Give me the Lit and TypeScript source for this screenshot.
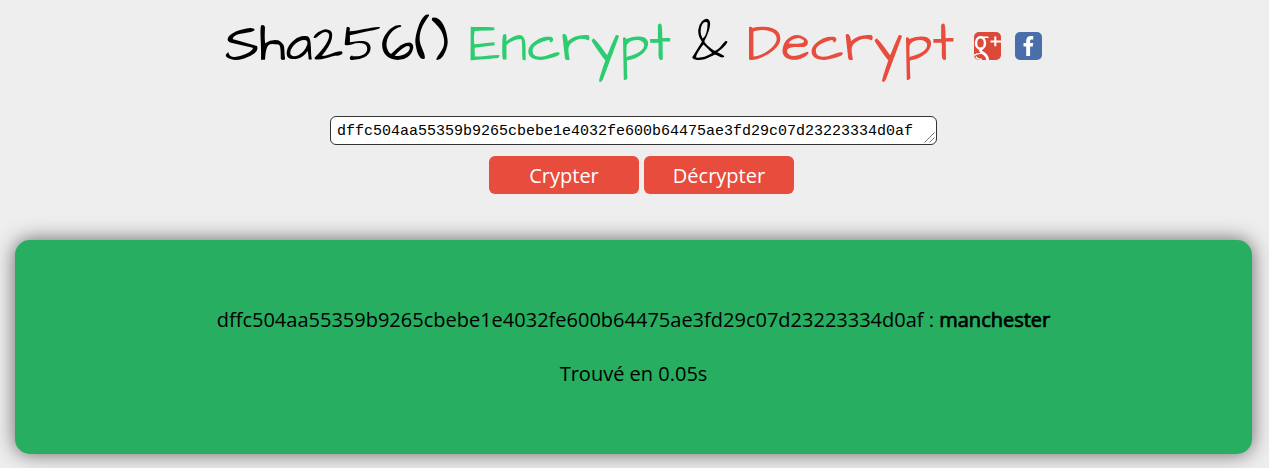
import { LitElement, html, css } from "lit";
import { customElement, state } from "lit/decorators.js";

@customElement("app-root")
class AppRoot extends LitElement {
  @state() private hash = "dffc504aa55359b9265cbebe1e4032fe600b64475ae3fd29c07d23223334d0af";

  static styles = css`
    :host { display: block; box-sizing: border-box; height: 468px; background: #eee; overflow: hidden;
      font-family: "Open Sans", sans-serif; font-size: 20px; color: #000; padding: 0 17px 0 15px; }
    h1 { margin: 0; height: 116px; display: flex; justify-content: flex-start; padding-left: 210px;
      box-sizing: border-box; font-family: "Architects Daughter", Lato, sans-serif; font-weight: 400; font-size: 53.33px;
      line-height: 56px; padding-top: 17px; white-space: nowrap; }
    .w { display: block; flex: none; }
    .sha { width: 244px; }
    .enc { width: 223px; color: #2ecc71; }
    .amp { width: 55px; }
    .dec { width: 227px; color: #e74c3c; }
    .icon { display: block; width: 27px; height: 28px; margin: 15px 14px 0 0; flex: none; }
    .field { position: relative; width: 607px; height: 29px; margin: 0 auto; }
    textarea { display: block; box-sizing: border-box; width: 607px; height: 29px; margin: 0; resize: none; overflow: hidden;
      border: 1px solid #333; border-radius: 6px; background: #fff; color: #000; outline: none;
      padding: 6px 6px 4px; font: 15px/18px "NSimSun", "Liberation Mono", monospace; letter-spacing: 0; white-space: nowrap; }
    .grip { position: absolute; right: 2px; bottom: 2px; width: 11px; height: 11px; }
    .buttons { display: flex; justify-content: center; gap: 5px; margin-top: 11px; padding-left: 16px; }
    button { width: 150px; height: 38px; border: 0; border-radius: 6px; padding: 2px 0 0 0; background: #e74c3c; color: #fff;
      font: 20px/36px "Open Sans", sans-serif; }
    .result { box-sizing: border-box; height: 214px; margin-top: 46px; border-radius: 15px; background: #27ae60;
      box-shadow: 0 0 20px #656565; padding-top: 66px; text-align: center; }
    p { margin: 0 0 27px; line-height: 27px; }
    .found { -webkit-text-stroke: 0.7px #000; }
  `;

  render() {
    return html`
      <h1>
        <span class="w sha">Sha256()</span>
        <span class="w enc">Encrypt</span>
        <span class="w amp">&amp;</span>
        <span class="w dec">Decrypt</span>
        <svg class="icon" viewBox="0 0 27 28">
          <defs><clipPath id="tile"><rect width="27" height="28" rx="5" /></clipPath></defs>
          <g clip-path="url(#tile)">
            <rect width="27" height="28" fill="#db4a38" />
            <g fill="none" stroke="#fff">
              <ellipse cx="6.500" cy="11" rx="4.500" ry="5.800" stroke-width="2.500" />
              <path d="M6 5.200h8.500" stroke-width="1.500" />
              <path d="M8 16.500c-2.500 1.500-1.500 3 1 4.500 3.500 2.300 5 4 4.500 7.500" stroke-width="2.800" />
              <path d="M9.500 21.500c-4-.4-7.500.3-9.500 2" stroke-width="1.500" />
              <path d="M2 24.500c.5 2 3 2.800 6 2.800" stroke-width="1.200" />
              <path d="M21.300 4.500v9.800M16.500 9.400h10.500" stroke-width="2" />
            </g>
          </g>
        </svg>
        <svg class="icon" viewBox="0 0 27 28">
          <rect width="27" height="28" rx="5" fill="#4a6ea9" />
          <path d="M11.200 24V14.500H8.500v-3.500h2.700V8.800c0-3.200 1.800-4.800 4.700-4.800h2.300v3.500h-1.700c-1 0-1.400.5-1.400 1.500v2h3.100l-.4 3.500h-2.700V24z" fill="#fff" />
        </svg>
      </h1>
      <div class="field">
        <textarea rows="1" spellcheck="false" .value=${this.hash}></textarea>
        <svg class="grip" viewBox="0 0 11 11"><path d="M.5 10.500l10-10M5.500 10.500l5-5" stroke="#666" stroke-width=".9" /></svg>
      </div>
      <div class="buttons"><button>Crypter</button><button>Décrypter</button></div>
      <section class="result">
        <p>${this.hash} : <span class="found">manchester</span></p>
        <p>Trouvé en 0.05s</p>
      </section>`;
  }
}
